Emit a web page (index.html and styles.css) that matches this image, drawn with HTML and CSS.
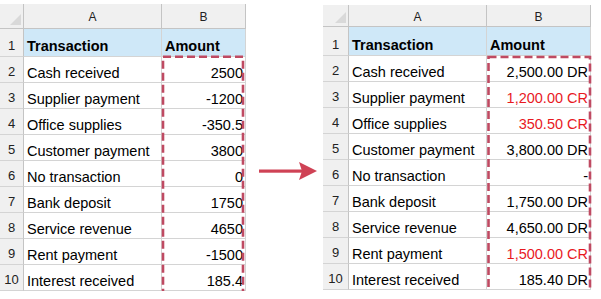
FILE: index.html
```html
<!DOCTYPE html>
<html>
<head>
<meta charset="utf-8">
<link rel="stylesheet" href="styles.css">
</head>
<body>
<div class="page">
  <div class="sheet sheet-left">
    <div class="corner"></div><div class="colhead">A</div><div class="colhead">B</div>
    <div class="rownum">1</div><div class="cell head">Transaction</div><div class="cell head">Amount</div>
    <div class="rownum">2</div><div class="cell">Cash received</div><div class="cell num">2500</div>
    <div class="rownum">3</div><div class="cell">Supplier payment</div><div class="cell num">-1200</div>
    <div class="rownum">4</div><div class="cell">Office supplies</div><div class="cell num">-350.5</div>
    <div class="rownum">5</div><div class="cell">Customer payment</div><div class="cell num">3800</div>
    <div class="rownum">6</div><div class="cell">No transaction</div><div class="cell num">0</div>
    <div class="rownum">7</div><div class="cell">Bank deposit</div><div class="cell num">1750</div>
    <div class="rownum">8</div><div class="cell">Service revenue</div><div class="cell num">4650</div>
    <div class="rownum">9</div><div class="cell">Rent payment</div><div class="cell num">-1500</div>
    <div class="rownum">10</div><div class="cell">Interest received</div><div class="cell num">185.4</div>
    <svg class="dash dash-left" width="90" height="250" viewBox="0 0 90 250"><rect x="3" y="2.7" width="80" height="238" fill="none" stroke="#bf4a62" stroke-width="2.6" stroke-dasharray="8 4"/></svg>
  </div>
  <div class="arrow-area">
    <svg width="60" height="20" viewBox="0 0 60 20"><rect x="0" y="8.5" width="44" height="3.2" fill="#cf4255"/><path d="M40 1 L58 10 L40 19 L43 10 Z" fill="#cf4255"/></svg>
  </div>
  <div class="sheet sheet-right">
    <div class="corner"></div><div class="colhead">A</div><div class="colhead">B</div>
    <div class="rownum">1</div><div class="cell head">Transaction</div><div class="cell head">Amount</div>
    <div class="rownum">2</div><div class="cell">Cash received</div><div class="cell num">2,500.00 DR</div>
    <div class="rownum">3</div><div class="cell">Supplier payment</div><div class="cell num red">1,200.00 CR</div>
    <div class="rownum">4</div><div class="cell">Office supplies</div><div class="cell num red">350.50 CR</div>
    <div class="rownum">5</div><div class="cell">Customer payment</div><div class="cell num">3,800.00 DR</div>
    <div class="rownum">6</div><div class="cell">No transaction</div><div class="cell num">-</div>
    <div class="rownum">7</div><div class="cell">Bank deposit</div><div class="cell num">1,750.00 DR</div>
    <div class="rownum">8</div><div class="cell">Service revenue</div><div class="cell num">4,650.00 DR</div>
    <div class="rownum">9</div><div class="cell">Rent payment</div><div class="cell num red">1,500.00 CR</div>
    <div class="rownum">10</div><div class="cell">Interest received</div><div class="cell num">185.40 DR</div>
    <svg class="dash dash-right" width="110" height="245" viewBox="0 0 110 245"><rect x="2.5" y="2" width="101.5" height="235.5" fill="none" stroke="#bf4a62" stroke-width="2.6" stroke-dasharray="8 4"/></svg>
  </div>
</div>
</body>
</html>
```
FILE: styles.css
```css
html, body {
  margin: 0;
  padding: 0;
  background: #ffffff;
}
.page {
  display: flex;
  align-items: flex-start;
  font-family: "Liberation Sans", Arial, sans-serif;
  color: #000;
}
.sheet {
  position: relative;
  display: grid;
}
.sheet-left {
  margin-top: 4px;
  grid-template-columns: 24px 138px 84px;
  grid-template-rows: 25px 28px repeat(9, 26px);
}
.sheet-right {
  margin-top: 5px;
  grid-template-columns: 26px 138px 104px;
  grid-template-rows: 22px 29px repeat(9, 26px);
}
.arrow-area {
  width: 77px;
  display: flex;
  justify-content: center;
  padding-top: 161px;
  padding-left: 8px;
  box-sizing: border-box;
}
.arrow-area svg {
  display: block;
}
.corner {
  background: #f0f0f0;
  border-right: 1px solid #c4c4c4;
  border-bottom: 1px solid #c4c4c4;
  position: relative;
}
.corner::after {
  content: "";
  position: absolute;
  right: 2px;
  bottom: 3px;
  width: 11px;
  height: 11px;
  background: #d9d9d9;
  clip-path: polygon(100% 0, 100% 100%, 0 100%);
}
.colhead {
  background: #f0f0f0;
  border-right: 1px solid #c4c4c4;
  border-bottom: 1px solid #c4c4c4;
  display: flex;
  align-items: center;
  justify-content: center;
  padding-top: 2px;
  font-size: 12px;
  color: #222;
  box-sizing: border-box;
}
.rownum {
  background: #f0f0f0;
  border-right: 1px solid #c4c4c4;
  border-bottom: 1px solid #d4d4d4;
  display: flex;
  align-items: flex-end;
  justify-content: center;
  font-size: 13px;
  line-height: 15px;
  padding-bottom: 3px;
  color: #222;
  box-sizing: border-box;
}
.cell {
  border-right: 1px solid #d4d4d4;
  border-bottom: 1px solid #d4d4d4;
  display: flex;
  align-items: flex-end;
  font-size: 14.5px;
  line-height: 17px;
  padding: 0 3px 0 3px;
  white-space: nowrap;
  box-sizing: border-box;
}
.cell.head {
  background: #cfe8f8;
  font-weight: bold;
  padding-bottom: 1px;
}
.cell.num {
  justify-content: flex-end;
  padding-right: 2px;
}
.cell.red {
  color: #e8191f;
}
.dash {
  position: absolute;
  display: block;
  pointer-events: none;
}
.dash-left {
  left: 160px;
  top: 50px;
}
.dash-right {
  left: 163px;
  top: 50px;
}
```
